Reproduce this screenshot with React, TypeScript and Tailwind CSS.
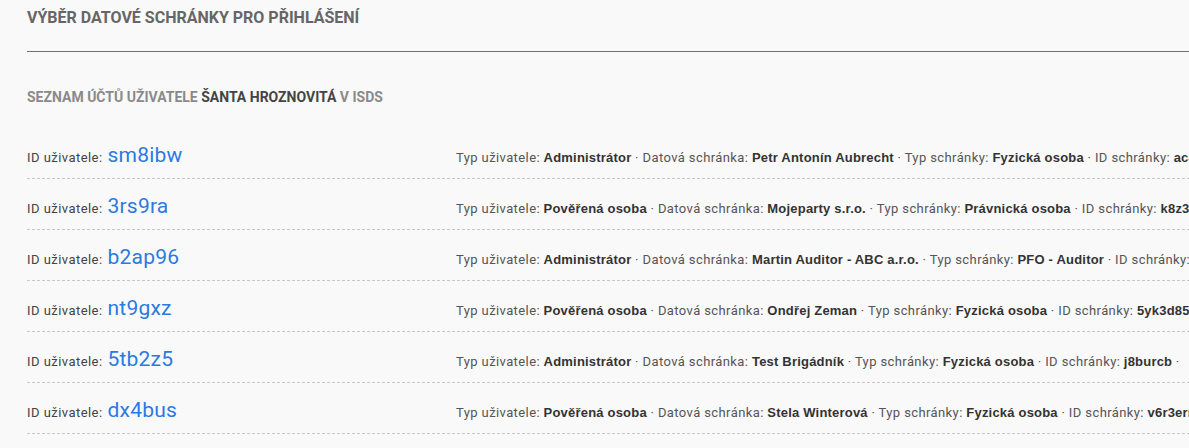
import React from "react";

type Row = {
  id: string;
  typ: string;
  schranka: string;
  typSchranky: string;
  idSchranky: string;
};

const rows: Row[] = [
  { id: "sm8ibw", typ: "Administrátor", schranka: "Petr Antonín Aubrecht", typSchranky: "Fyzická osoba", idSchranky: "ac4mfx9" },
  { id: "3rs9ra", typ: "Pověřená osoba", schranka: "Mojeparty s.r.o.", typSchranky: "Právnická osoba", idSchranky: "k8z3d2p" },
  { id: "b2ap96", typ: "Administrátor", schranka: "Martin Auditor - ABC a.r.o.", typSchranky: "PFO - Auditor", idSchranky: "h7tqr2a" },
  { id: "nt9gxz", typ: "Pověřená osoba", schranka: "Ondřej Zeman", typSchranky: "Fyzická osoba", idSchranky: "5yk3d85" },
  { id: "5tb2z5", typ: "Administrátor", schranka: "Test Brigádník", typSchranky: "Fyzická osoba", idSchranky: "j8burcb" },
  { id: "dx4bus", typ: "Pověřená osoba", schranka: "Stela Winterová", typSchranky: "Fyzická osoba", idSchranky: "v6r3erm" },
];

const B = ({ children }: { children: React.ReactNode }) => (
  <b className="font-bold text-[#333] tracking-[0.2px] [font-family:'Liberation_Sans',Arial,sans-serif]">{children}</b>
);

export default function App() {
  return (
    <div className="w-[1189px] h-[448px] overflow-hidden bg-[#f9f9f9] [font-family:Roboto,'Liberation_Sans',sans-serif]">
      <div className="pl-[27px] w-[1500px]">
        <div className="h-[52px] border-b border-[#707070] pt-[10px]">
          <h1 className="text-[16px] leading-[16px] font-bold uppercase text-[#666]">
            Výběr datové schránky pro přihlášení
          </h1>
        </div>
        <h2 className="mt-[38px] mb-[24px] text-[14px] leading-[14px] font-bold uppercase text-[#8a8a8a]">
          Seznam účtů uživatele <span className="text-[#444]">Šanta Hroznovitá</span> v ISDS
        </h2>
        <div>
          {rows.map((r) => (
            <div
              key={r.id}
              className="flex items-baseline whitespace-nowrap h-[51px] pt-[15px] border-b border-dashed border-[#c8c8c8]"
            >
              <div className="w-[429px] shrink-0 flex items-baseline">
                <span className="text-[13px] text-[#444] tracking-[0.45px]">ID uživatele:</span>
                <a className="ml-[5px] text-[21px] leading-[24px] text-[#2a7ae2] tracking-[0.2px]">{r.id}</a>
              </div>
              <div className="text-[13px] text-[#555] tracking-[0.4px]">
                Typ uživatele: <B>{r.typ}</B> · Datová schránka: <B>{r.schranka}</B> · Typ schránky:{" "}
                <B>{r.typSchranky}</B> · ID schránky: <B>{r.idSchranky}</B> ·{"  "}
                <span className="pl-[8px]">Stav: <B>Aktivní</B></span>
              </div>
            </div>
          ))}
        </div>
      </div>
    </div>
  );
}
